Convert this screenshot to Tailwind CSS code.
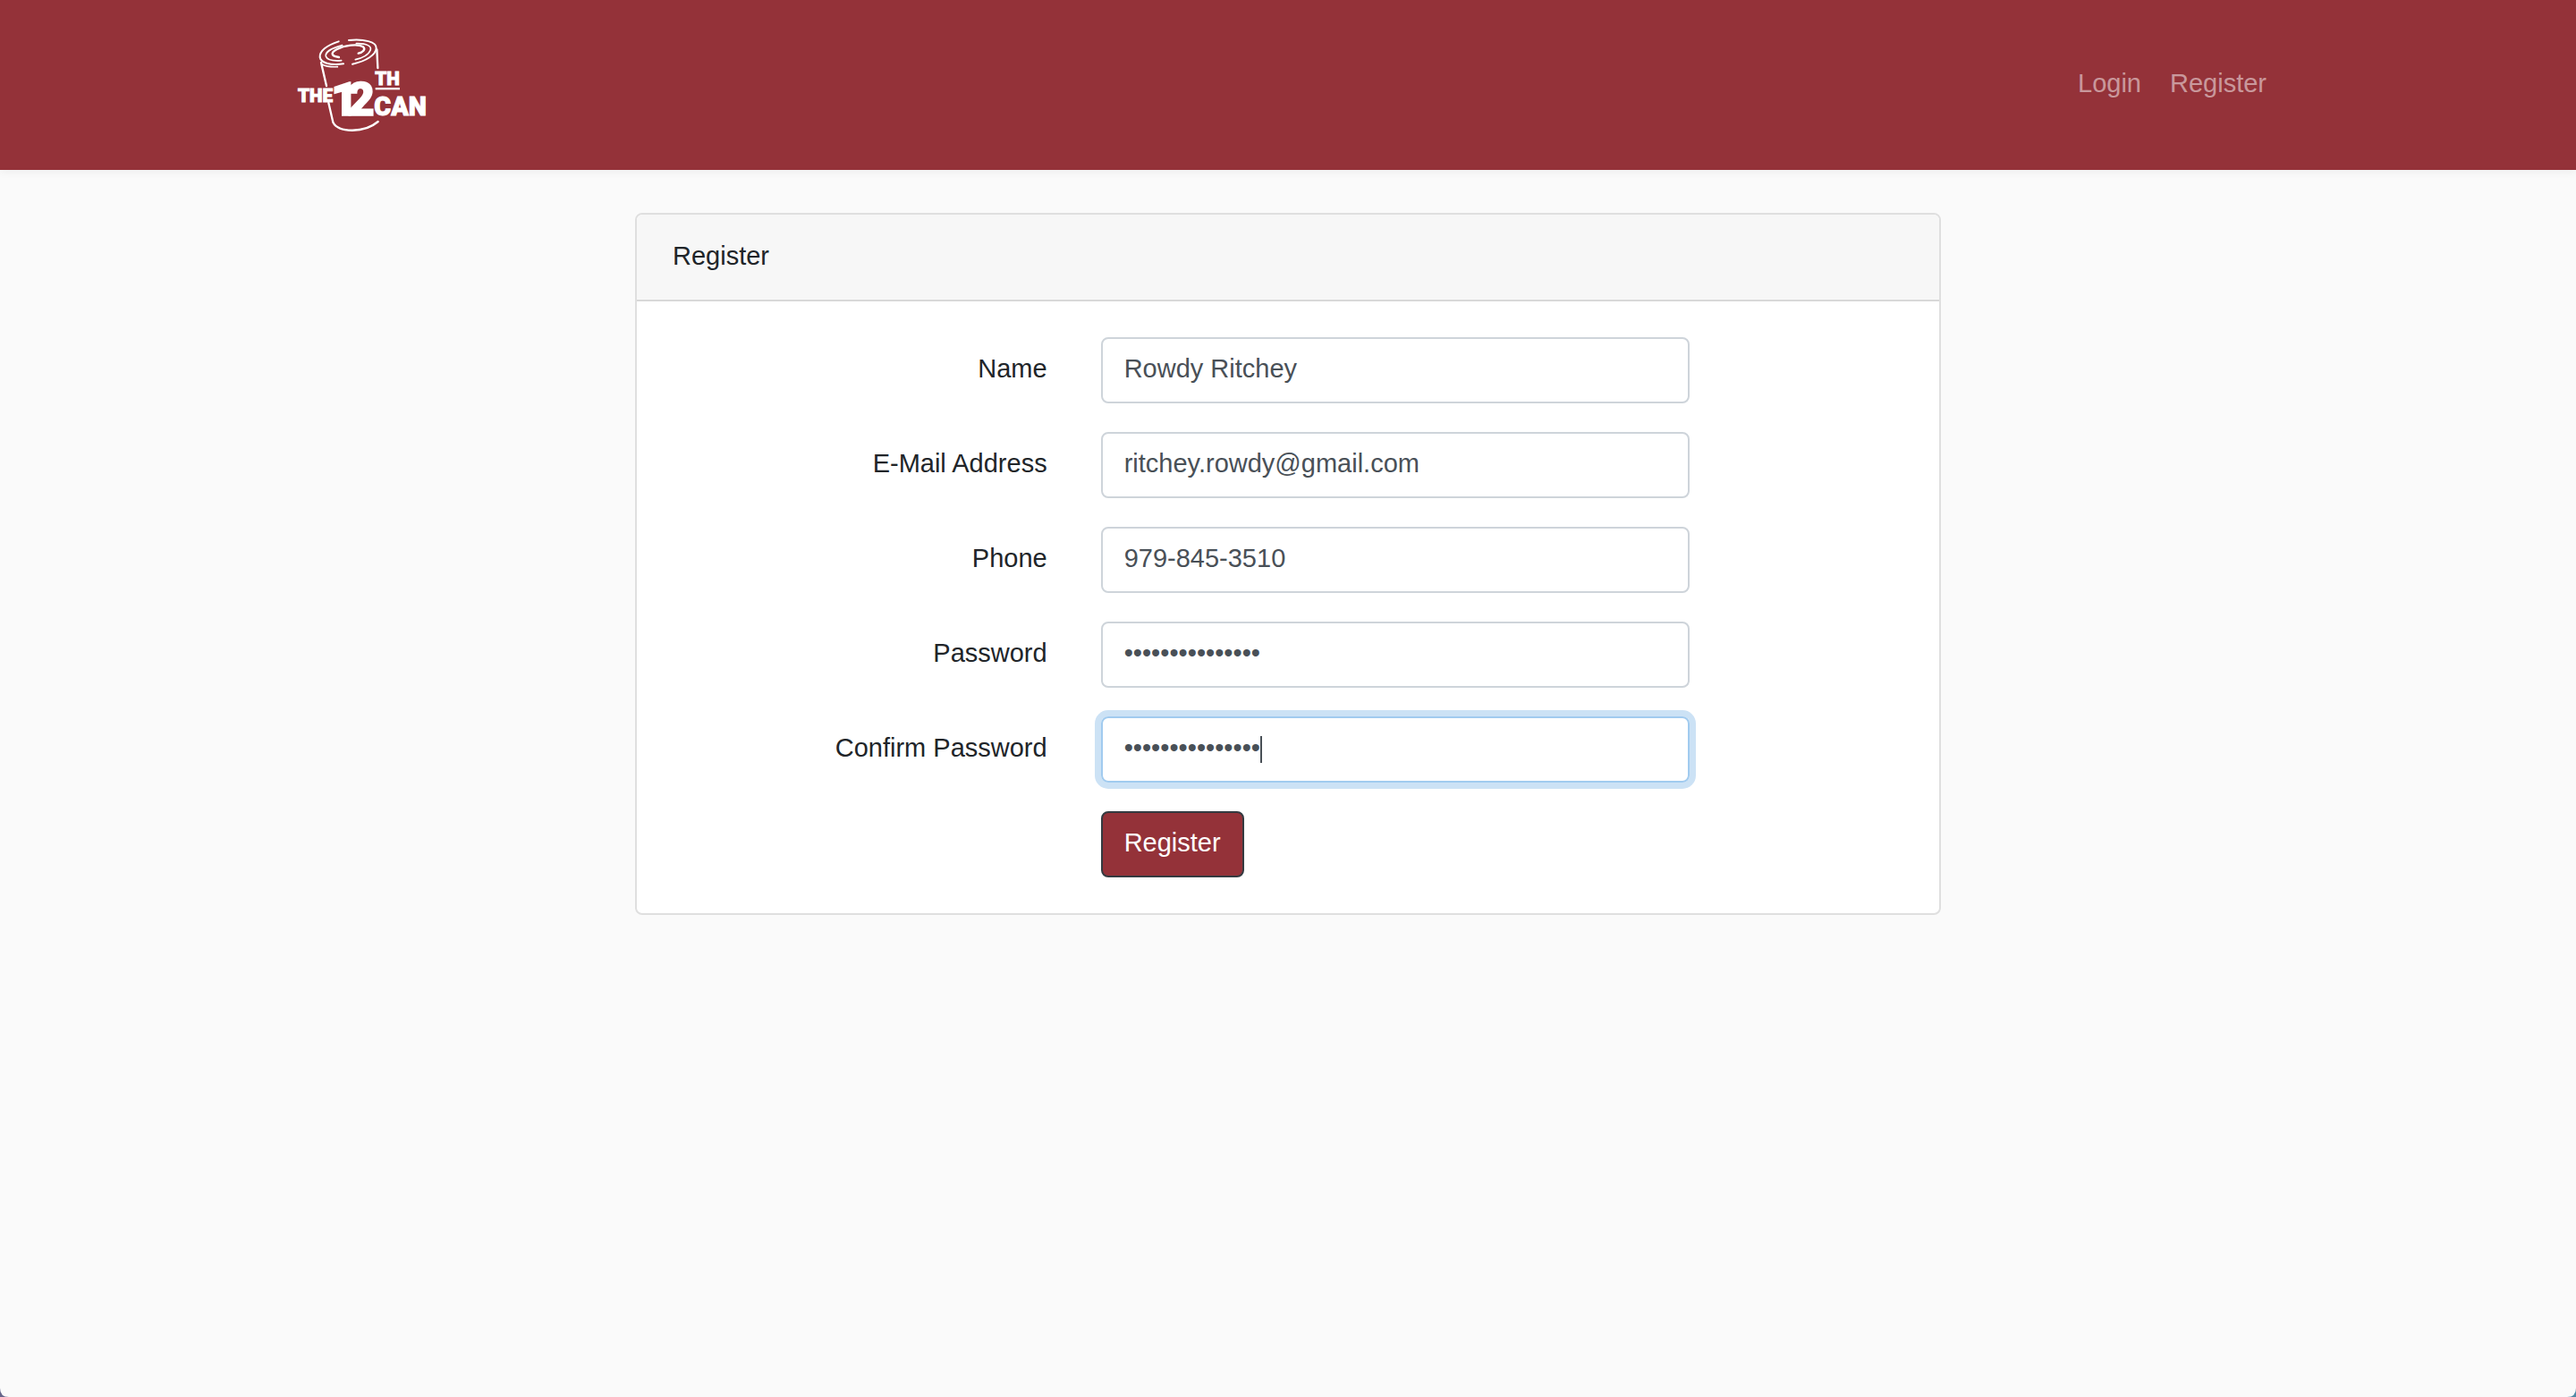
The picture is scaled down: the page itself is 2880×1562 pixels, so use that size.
<!DOCTYPE html>
<html lang="en">
<head>
<meta charset="utf-8">
<title>The 12th Can</title>
<script src="https://cdn.jsdelivr.net/npm/@tailwindcss/browser@4"></script>
</head>
<body class="relative min-h-screen overflow-x-hidden bg-[#fafafa] font-['Liberation_Sans',Arial,sans-serif] text-[29px] leading-[46px] text-[#212529]">
<nav class="bg-[#943239] shadow-[0_4px_8px_rgba(0,0,0,0.04)]">
  <div class="mx-auto flex h-[190px] max-w-[2280px] items-center justify-between px-[30px]">
    <a href="#" aria-label="The 12th Can">
      <svg class="block h-[130px] w-[190px] -ml-5" viewBox="0 0 570 390" fill="#fff">
        <g fill="none" stroke="#fff" stroke-linecap="round">
          <path stroke-width="6" d="M206 49C165 62 141 82 143 102C146 120 175 130 222 124"/>
          <path stroke-width="6" d="M240 45C290 40 334 50 332 72C330 94 300 114 252 125"/>
          <path stroke-width="5" d="M218 62C180 72 160 86 163 99C167 111 187 115 215 113"/>
          <path stroke-width="5" d="M265 56C300 55 318 65 312 79C307 93 286 105 262 110"/>
          <path stroke-width="7" d="M207 102C180 99 178 87 199 76C225 62 270 56 288 67C298 76 286 86 272 89"/>
          <path stroke-width="7" d="M147 120L165 198M172 255L187 320C205 355 290 358 338 318M334 76L337 138"/>
          <path stroke-width="5" d="M150 126C165 134 180 135 202 134"/>
        </g>
        <g class="font-['Roboto',sans-serif] font-black" stroke="#fff" stroke-width="3">
          <text x="69" y="252" font-size="62">THE</text>
          <text x="180 235" y="298" font-size="158" stroke-width="5">12</text>
          <text x="328" y="196" font-size="62">TH</text>
          <text x="325" y="298" font-size="86">CAN</text>
        </g>
        <path d="M329 204H411V211H329Z"/>
      </svg>
    </a>
    <div class="flex gap-8 px-4 pb-1 text-white/50">
      <a href="#">Login</a>
      <a href="#">Register</a>
    </div>
  </div>
</nav>
<main class="px-[30px] py-12">
  <section class="mx-auto max-w-[1460px] rounded-lg border-2 border-[#dfdfdf] bg-white">
    <h1 class="rounded-t-md border-b-2 border-[#d8d8d8] bg-[#f7f7f7] px-10 pt-[23px] pb-[26px]">Register</h1>
    <form class="flex flex-col gap-8 p-10">
      <div class="grid grid-cols-12 gap-x-[60px]">
        <label for="name" class="col-span-4 pt-3 pb-4 text-right">Name</label>
        <input id="name" type="text" value="Rowdy Ritchey" class="col-span-6 h-[74px] rounded-lg border-2 border-[#ced4da] px-6 pt-2.5 pb-3.5 text-[#495057]">
      </div>
      <div class="grid grid-cols-12 gap-x-[60px]">
        <label for="email" class="col-span-4 pt-3 pb-4 text-right">E-Mail Address</label>
        <input id="email" type="email" value="ritchey.rowdy@gmail.com" class="col-span-6 h-[74px] rounded-lg border-2 border-[#ced4da] px-6 pt-2.5 pb-3.5 text-[#495057]">
      </div>
      <div class="grid grid-cols-12 gap-x-[60px]">
        <label for="phone" class="col-span-4 pt-3 pb-4 text-right">Phone</label>
        <input id="phone" type="tel" value="979-845-3510" class="col-span-6 h-[74px] rounded-lg border-2 border-[#ced4da] px-6 pt-2.5 pb-3.5 text-[#495057]">
      </div>
      <div class="grid grid-cols-12 gap-x-[60px]">
        <label for="password" class="col-span-4 pt-3 pb-4 text-right">Password</label>
        <input id="password" type="password" value="rowdyritchey123" class="col-span-6 h-[74px] rounded-lg border-2 border-[#ced4da] px-6 pt-2.5 pb-3.5 text-[#495057]">
      </div>
      <div class="grid grid-cols-12 gap-x-[60px]">
        <label for="confirm" class="col-span-4 pt-3 pb-4 text-right">Confirm Password</label>
        <div class="relative col-span-6">
          <input id="confirm" type="password" value="rowdyritchey123" class="h-[74px] w-full rounded-lg border-2 border-[#a1cbef] px-6 pt-2.5 pb-3.5 text-[#495057] ring-[7px] ring-[#cce2f5]">
          <span class="absolute top-[22px] left-[178px] h-[30px] w-0.5 bg-[#495057]"></span>
        </div>
      </div>
      <div class="grid grid-cols-12 gap-x-[60px]">
        <div class="col-span-6 col-start-5 flex">
          <button type="submit" class="h-[74px] rounded-lg border-2 border-[#343a40] bg-[#943239] px-6 pt-2.5 pb-3.5 text-white">Register</button>
        </div>
      </div>
    </form>
  </section>
</main>
<!-- rounded window corners -->
<svg class="absolute bottom-0 left-0 size-2.5" viewBox="0 0 10 10" aria-hidden="true"><path fill="#66658a" d="M0 0Q0 10 10 10H0Z"/></svg>
<svg class="absolute right-0 bottom-0 size-2.5" viewBox="0 0 10 10" aria-hidden="true"><path fill="#4f8aa6" d="M10 0Q10 10 0 10H10Z"/></svg>
</body>
</html>
